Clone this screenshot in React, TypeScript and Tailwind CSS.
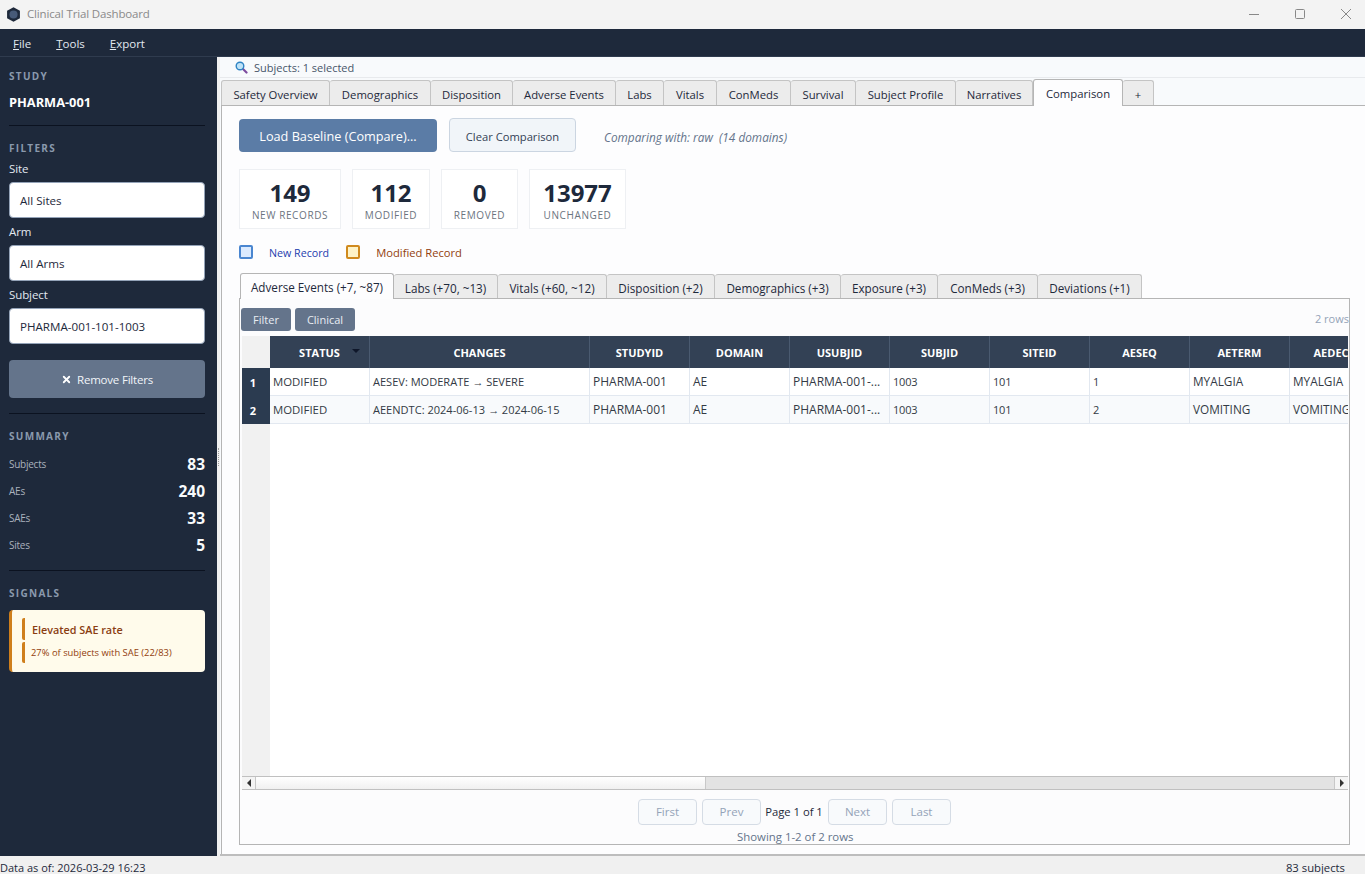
import React from 'react';
import { X } from 'lucide-react';

const MAIN_TABS = [
  { label: 'Safety Overview', w: 'w-[109px]' },
  { label: 'Demographics', w: 'w-[101px]' },
  { label: 'Disposition', w: 'w-[82px]' },
  { label: 'Adverse Events', w: 'w-[103px]' },
  { label: 'Labs', w: 'w-[48px]' },
  { label: 'Vitals', w: 'w-[53px]' },
  { label: 'ConMeds', w: 'w-[74px]' },
  { label: 'Survival', w: 'w-[65px]' },
  { label: 'Subject Profile', w: 'w-[100px]' },
  { label: 'Narratives', w: 'w-[77px]' },
  { label: 'Comparison', w: 'w-[90px]', active: true },
  { label: '+', w: 'w-[31px]' },
];

const DOMAIN_TABS = [
  { label: 'Adverse Events (+7, ~87)', w: 'w-[154px]', active: true },
  { label: 'Labs (+70, ~13)', w: 'w-[104px]' },
  { label: 'Vitals (+60, ~12)', w: 'w-[109px]' },
  { label: 'Disposition (+2)', w: 'w-[108px]' },
  { label: 'Demographics (+3)', w: 'w-[126px]' },
  { label: 'Exposure (+3)', w: 'w-[97px]' },
  { label: 'ConMeds (+3)', w: 'w-[100px]' },
  { label: 'Deviations (+1)', w: 'w-[104px]' },
];

const STATS = [
  { value: '149', label: 'NEW RECORDS', w: 'w-[102px]' },
  { value: '112', label: 'MODIFIED', w: 'w-[78px]' },
  { value: '0', label: 'REMOVED', w: 'w-[77px]' },
  { value: '13977', label: 'UNCHANGED', w: 'w-[97px]' },
];

const SUMMARY = [
  ['Subjects', '83'],
  ['AEs', '240'],
  ['SAEs', '33'],
  ['Sites', '5'],
];

const COLUMNS = ['STATUS', 'CHANGES', 'STUDYID', 'DOMAIN', 'USUBJID', 'SUBJID', 'SITEID', 'AESEQ', 'AETERM', 'AEDECOD'];

const ROWS = [
  ['MODIFIED', 'AESEV: MODERATE → SEVERE', 'PHARMA-001', 'AE', 'PHARMA-001-...', '1003', '101', '1', 'MYALGIA', 'MYALGIA'],
  ['MODIFIED', 'AEENDTC: 2024-06-13 → 2024-06-15', 'PHARMA-001', 'AE', 'PHARMA-001-...', '1003', '101', '2', 'VOMITING', 'VOMITING'],
];

const CELL_SIZES = [
  'text-[11.4px]',
  'text-[11.05px]',
  'text-[12px]',
  'text-[12px]',
  'text-[12px]',
  'text-[11px] tracking-[-0.2px]',
  'text-[11px] tracking-[-0.2px]',
  'text-[11px]',
  'text-[11.8px]',
  'text-[11.8px]',
];

const GRID_COLS = 'grid grid-cols-[28px_100px_220px_100px_100px_100px_100px_100px_100px_100px_100px]';

function SectionLabel({ children }: { children: React.ReactNode }) {
  return <div className="text-[10px] leading-[12px] font-bold tracking-[1.3px] text-[#8a99ad]">{children}</div>;
}

function Divider({ className }: { className: string }) {
  return <div className={`h-px bg-[#0b1220] ${className}`} />;
}

function Field({ label, value }: { label: string; value: string }) {
  return (
    <div>
      <div className="text-[11.5px] leading-[16px] tracking-[-0.1px] text-[#e2e8f0]">{label}</div>
      <div className="mt-[5px] h-[36px] pt-px rounded-[4px] bg-white border border-[#94a3b8] flex items-center pl-[10px] text-[11.6px] text-[#1e293b]">
        {value}
      </div>
    </div>
  );
}

function Sidebar() {
  return (
    <aside className="w-[217px] bg-[#1e293b] px-[9px] pt-[13px] shrink-0">
      <div className="w-[196px]">
        <SectionLabel>STUDY</SectionLabel>
        <div className="mt-[10px] text-[12.8px] leading-[20px] font-bold text-white">PHARMA-001</div>
        <Divider className="mt-[13px]" />
        <div className="mt-[16px]">
          <SectionLabel>FILTERS</SectionLabel>
        </div>
        <div className="mt-[7px] flex flex-col gap-[6px]">
          <Field label="Site" value="All Sites" />
          <Field label="Arm" value="All Arms" />
          <Field label="Subject" value="PHARMA-001-101-1003" />
        </div>
        <button className="mt-[16px] w-full h-[38px] pt-px rounded-[4px] bg-[#64748b] flex items-center justify-center gap-[5px] text-[11.5px] tracking-[-0.2px] text-[#f1f5f9]">
          <X size={11} strokeWidth={4} className="text-white" />
          Remove Filters
        </button>
        <Divider className="mt-[15px]" />
        <div className="mt-[16px]">
          <SectionLabel>SUMMARY</SectionLabel>
        </div>
        <div className="mt-[9px] flex flex-col">
          {SUMMARY.map(([label, value]) => (
            <div key={label} className="h-[27px] flex items-center justify-between">
              <span className="text-[10px] tracking-[-0.25px] text-[#aab2bd]">{label}</span>
              <span className="text-[15.5px] font-bold text-[#f8fafc]">{value}</span>
            </div>
          ))}
        </div>
        <Divider className="mt-[11px]" />
        <div className="mt-[16px]">
          <SectionLabel>SIGNALS</SectionLabel>
        </div>
        <div className="mt-[11px] h-[62px] rounded-[4px] bg-[#fffbeb] border-l-[3px] border-[#cf7f1c] pl-[10px] py-[8px] flex flex-col gap-[2px]">
          <div className="h-[22px] border-l-[3px] border-[#cf7f1c] rounded-[2px] pl-[7px] text-[10.8px] leading-[24px] font-semibold text-[#8a3d12]">
            Elevated SAE rate
          </div>
          <div className="h-[21px] border-l-[3px] border-[#cf7f1c] rounded-[2px] pl-[6px] text-[9.4px] leading-[22px] text-[#92400e]">
            27% of subjects with SAE (22/83)
          </div>
        </div>
      </div>
    </aside>
  );
}

function TabStrip({ tabs, activeHeight, height, size }: { tabs: { label: string; w: string; active?: boolean }[]; activeHeight: string; height: string; size: string }) {
  return (
    <div className="flex items-end">
      {tabs.map((tab) =>
        tab.active ? (
          <div
            key={tab.label}
            className={`${tab.w} ${activeHeight} ${size} pt-[3px] -mb-px z-10 relative flex items-center justify-center rounded-t-[3px] border border-b-0 border-[#b5b5b5] bg-[#fdfdfe] text-[#1e293b]`}
          >
            {tab.label}
          </div>
        ) : (
          <div
            key={tab.label}
            className={`${tab.w} ${height} ${size} pt-[4px] flex items-center justify-center rounded-t-[3px] border border-b-0 border-l-0 first:border-l border-[#c4c4c4] bg-[#ececec] text-[#1e293b]`}
          >
            {tab.label}
          </div>
        ),
      )}
    </div>
  );
}

function Stat({ value, label, w }: { value: string; label: string; w: string }) {
  return (
    <div className={`${w} h-[60px] bg-white border border-[#eef0f3] flex flex-col items-center pt-[8px]`}>
      <div className="text-[24px] leading-[30px] font-bold text-[#1e293b]">{value}</div>
      <div className="mt-[1px] text-[10px] leading-[13px] tracking-[0.6px] text-[#6b7480]">{label}</div>
    </div>
  );
}

function Grid() {
  return (
    <div className="mt-[5px] ml-[2px] mr-px flex-1 min-h-0 flex flex-col overflow-hidden">
      <div className={`${GRID_COLS} h-[32px] shrink-0`}>
        <div className="bg-[#f1f1f1]" />
        {COLUMNS.map((col, i) => (
          <div key={col} className="relative pt-[2px] bg-[#334155] border-r border-[#4a5a70] flex items-center justify-center text-[11px] font-bold text-white">
            {col}
            {i === 0 && <span className="absolute right-[9px] top-[13px] border-x-[4px] border-t-[4px] border-x-transparent border-t-[#0f172a]" />}
          </div>
        ))}
      </div>
      {ROWS.map((row, r) => (
        <div key={r} className={`${GRID_COLS} h-[28px] shrink-0 ${r === 1 ? 'bg-[#f8fafc]' : 'bg-white'}`}>
          <div className="bg-[#2b3b50] pr-[6px] pt-[2px] flex items-center justify-center text-[11px] font-bold text-white">{r + 1}</div>
          {row.map((cell, c) => (
            <div key={c} className={`${CELL_SIZES[c]} pt-px border-r border-b border-[#e2e8f0] flex items-center pl-[3px] text-[#333a45] whitespace-nowrap overflow-hidden`}>
              {cell}
            </div>
          ))}
        </div>
      ))}
      <div className="flex-1 flex min-h-0 bg-white">
        <div className="w-[28px] bg-[#f1f1f1]" />
      </div>
      <div className="h-[14px] shrink-0 flex border-y border-[#c0c0c0] bg-[#e3e3e3]">
        <div className="w-[14px] bg-[#f4f4f4] border-r border-[#c8c8c8] flex items-center justify-center">
          <span className="border-y-[4px] border-r-[4px] border-y-transparent border-r-[#333]" />
        </div>
        <div className="w-[450px] bg-gradient-to-b from-white to-[#f0f0f0] border-r border-[#c8c8c8]" />
        <div className="flex-1" />
        <div className="w-[14px] bg-[#f4f4f4] border-l border-[#c8c8c8] flex items-center justify-center">
          <span className="border-y-[4px] border-l-[4px] border-y-transparent border-l-[#333]" />
        </div>
      </div>
    </div>
  );
}

function PageButton({ label }: { label: string }) {
  return (
    <div className="w-[59px] h-[26px] rounded-[4px] border border-[#d5dce5] bg-[#f8fafc] flex items-center justify-center text-[11.5px] text-[#94a3b8]">
      {label}
    </div>
  );
}

function SearchIcon() {
  return (
    <svg width="13" height="13" viewBox="0 0 13 13" className="shrink-0">
      <path d="M7.5 7.5 L11.5 11.5" stroke="#7c4a9e" strokeWidth="2.2" strokeLinecap="round" />
      <circle cx="5" cy="5" r="3.8" fill="#bfe3f7" stroke="#2f83c4" strokeWidth="1.4" />
    </svg>
  );
}

function WindowControls() {
  return (
    <div className="flex items-center pb-[2px]">
      <svg width="12" height="12" viewBox="0 0 12 12" className="mr-[34px]">
        <path d="M1 6.5 H11" stroke="#888" strokeWidth="1" />
      </svg>
      <svg width="12" height="12" viewBox="0 0 12 12" className="mr-[34px]">
        <rect x="1.5" y="1.5" width="9" height="9" rx="1" fill="none" stroke="#888" strokeWidth="1" />
      </svg>
      <svg width="12" height="12" viewBox="0 0 12 12" className="mr-[13px]">
        <path d="M1 1 L11 11 M11 1 L1 11" stroke="#888" strokeWidth="1" />
      </svg>
    </div>
  );
}

function MenuItem({ first, rest }: { first: string; rest: string }) {
  return (
    <span className="text-[11.5px] text-[#e2e8f0]">
      <span className="underline">{first}</span>
      {rest}
    </span>
  );
}

export default function App() {
  return (
    <div className="h-screen w-screen overflow-hidden flex flex-col bg-[#f0f0f0] font-['Open_Sans',sans-serif]">
      <div className="h-[29px] shrink-0 bg-[#f3f3f3] flex items-center justify-between">
        <div className="flex items-center pl-[6px] gap-[6px] pb-px">
          <svg width="15" height="15" viewBox="0 0 14 14" className="shrink-0">
            <path d="M7 0.3 L13 3.6 V10.4 L7 13.7 L1 10.4 V3.6 Z" fill="#1e293b" />
            <circle cx="7" cy="7" r="3.8" fill="#475a78" />
          </svg>
          <span className="text-[11.5px] tracking-[-0.15px] text-[#8a8a8a]">Clinical Trial Dashboard</span>
        </div>
        <WindowControls />
      </div>

      <div className="h-[28px] shrink-0 pt-[2px] bg-[#1e293b] border-b border-[#2f3b4e] flex items-center pl-[13px] gap-[25px]">
        <MenuItem first="F" rest="ile" />
        <MenuItem first="T" rest="ools" />
        <MenuItem first="E" rest="xport" />
      </div>

      <div className="flex-1 min-h-0 flex">
        <Sidebar />
        <div className="w-[3px] shrink-0 bg-[#f0f0f0] flex items-center justify-center">
          <div className="h-[18px] border-l border-dotted border-[#9a9a9a]" />
        </div>

        <main className="flex-1 min-w-0 flex flex-col bg-[#f8fafc] border-b-2 border-[#bdbdbd]">
          <div className="h-[21px] shrink-0 flex items-center pl-[15px] gap-[6px] border-b border-[#e8eaed] text-[11px] text-[#475569]">
            <SearchIcon />
            <span className="pt-[3px]">Subjects: 1 selected</span>
          </div>
          <div className="pt-px pl-px">
            <TabStrip tabs={MAIN_TABS} height="h-[25px]" activeHeight="h-[27px]" size="text-[11.3px]" />
          </div>
          <div className="flex-1 min-h-0 ml-px border-t border-l border-[#b5b5b5] bg-[#fdfdfe] flex flex-col pl-[17px] pr-[14px]">
            <div className="mt-[12px] flex items-center">
              <button className="w-[198px] h-[33px] pt-[4px] rounded-[4px] bg-[#5b7ca6] text-[12.7px] text-white">Load Baseline (Compare)...</button>
              <button className="ml-[12px] w-[127px] h-[34px] pt-[5px] rounded-[4px] bg-[#f1f5f9] border border-[#cbd5e1] text-[11.2px] text-[#334155]">Clear Comparison</button>
              <span className="ml-[28px] pt-[5px] text-[11.8px] italic text-[#64748b]">Comparing with: raw&nbsp; (14 domains)</span>
            </div>
            <div className="mt-[17px] flex gap-[11px]">
              {STATS.map((stat) => (
                <Stat key={stat.label} {...stat} />
              ))}
            </div>
            <div className="mt-[15px] h-[16px] flex items-center">
              <span className="w-[14px] h-[14px] rounded-[2px] bg-[#dbeafe] border-2 border-[#4a86d0]" />
              <span className="ml-[16px] pt-[2px] text-[10.7px] text-[#1e40af]">New Record</span>
              <span className="ml-[17px] w-[14px] h-[14px] rounded-[2px] bg-[#fef3c7] border-2 border-[#d08a1e]" />
              <span className="ml-[16px] pt-[2px] text-[11.2px] text-[#92400e]">Modified Record</span>
            </div>
            <div className="mt-[13px] pl-px">
              <TabStrip tabs={DOMAIN_TABS} height="h-[24px]" activeHeight="h-[26px]" size="text-[11.7px]" />
            </div>
            <div className="flex-1 min-h-0 mb-[9px] w-[1111px] border border-[#b5b5b5] bg-[#fcfcfd] flex flex-col">
              <div className="mt-[9px] ml-px h-[23px] shrink-0 flex items-center gap-[4px] text-[11px] text-[#e8edf3]">
                <div className="w-[50px] h-[23px] pt-px rounded-[3px] bg-[#64748b] flex items-center justify-center">Filter</div>
                <div className="w-[60px] h-[23px] pt-px rounded-[3px] bg-[#64748b] flex items-center justify-center">Clinical</div>
                <div className="ml-auto text-[#94a3b8]">2 rows</div>
              </div>
              <Grid />
              <div className="mt-[9px] h-[26px] shrink-0 pl-[398px] flex items-center gap-[5px]">
                <PageButton label="First" />
                <PageButton label="Prev" />
                <span className="-ml-px w-[58px] text-center text-[11.25px] whitespace-nowrap text-[#1e293b]">Page 1 of 1</span>
                <PageButton label="Next" />
                <PageButton label="Last" />
              </div>
              <div className="h-[19px] shrink-0 pt-[5px] pl-[497px] flex items-center text-[11.4px] text-[#64748b]">Showing 1-2 of 2 rows</div>
            </div>
          </div>
        </main>
      </div>

      <div className="h-[18px] shrink-0 bg-[#f0f0f0] flex items-start justify-between pr-[20px] text-[11px] leading-[24px] text-[#1e293b]">
        <span>Data as of: 2026-03-29 16:23</span>
        <span className="text-[11.3px]">83 subjects</span>
      </div>
    </div>
  );
}
